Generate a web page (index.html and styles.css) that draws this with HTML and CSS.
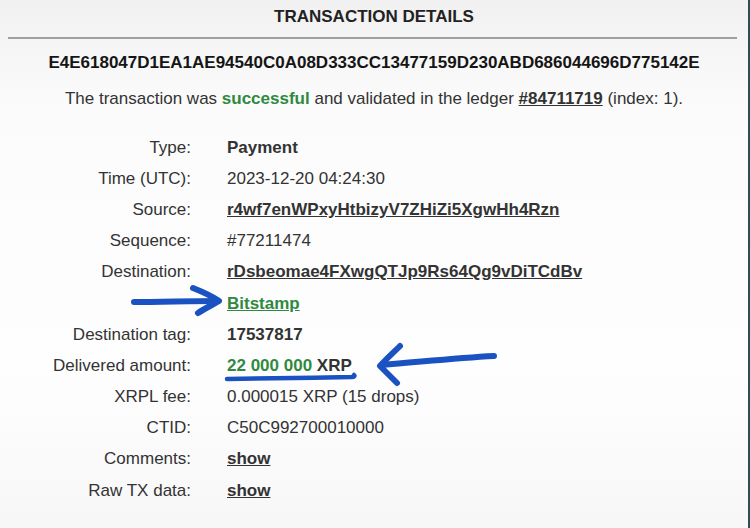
FILE: index.html
```html
<!DOCTYPE html>
<html>
<head>
<meta charset="utf-8">
<link rel="stylesheet" href="styles.css">
</head>
<body>
<div class="page">
  <h1 class="title">TRANSACTION DETAILS</h1>
  <div class="rule"></div>
  <div class="hash">E4E618047D1EA1AE94540C0A08D333CC13477159D230ABD686044696D775142E</div>
  <p class="status">The transaction was <b class="ok">successful</b> and validated in the ledger <a class="link" href="#">#84711719</a> (index: 1).</p>
  <div class="details">
    <div class="label">Type:</div><div class="value"><b>Payment</b></div>
    <div class="label">Time (UTC):</div><div class="value">2023-12-20 04:24:30</div>
    <div class="label">Source:</div><div class="value"><a class="link" href="#">r4wf7enWPxyHtbizyV7ZHiZi5XgwHh4Rzn</a></div>
    <div class="label">Sequence:</div><div class="value">#77211474</div>
    <div class="label">Destination:</div><div class="value"><a class="link" href="#">rDsbeomae4FXwgQTJp9Rs64Qg9vDiTCdBv</a></div>
    <div class="label"></div><div class="value"><a class="link green" href="#">Bitstamp</a></div>
    <div class="label">Destination tag:</div><div class="value"><b>17537817</b></div>
    <div class="label">Delivered amount:</div><div class="value"><b class="ok">22 000 000</b> <b>XRP</b></div>
    <div class="label">XRPL fee:</div><div class="value">0.000015 XRP (15 drops)</div>
    <div class="label">CTID:</div><div class="value">C50C992700010000</div>
    <div class="label">Comments:</div><div class="value"><a class="link" href="#">show</a></div>
    <div class="label">Raw TX data:</div><div class="value"><a class="link" href="#">show</a></div>
  </div>
  <svg class="marks" width="750" height="528" viewBox="0 0 750 528">
    <g fill="none" stroke="#1b52c2" stroke-linecap="round" stroke-linejoin="round">
      <path d="M134 302 C160 302 190 301 216 301" stroke-width="6"/>
      <path d="M193 288 C203 292 212 296 219 301 C212 305 204 309 198 313" stroke-width="6"/>
      <path d="M494 356 C455 358 420 362 382 365" stroke-width="6"/>
      <path d="M400 346 C393 353 386 359 380 366 C386 372 392 378 397 383" stroke-width="6"/>
      <path d="M227 379 C265 378 310 378 352 377 C354 377 355 376 354 375" stroke-width="4.5"/>
    </g>
  </svg>
</div>
</body>
</html>
```
FILE: styles.css
```css
html, body {
  margin: 0;
  padding: 0;
}
body {
  width: 750px;
  height: 528px;
  overflow: hidden;
  font-family: "Liberation Sans", Arial, sans-serif;
  font-size: 17px;
  color: #333;
}
.page {
  position: relative;
  box-sizing: border-box;
  width: 750px;
  height: 528px;
  background: linear-gradient(#f1f1f1, #fbfbfb 20%, #fefefe 70%, #f7f7f7);
  border-right: 2px solid #2c4e58;
  padding-top: 2px;
}
.title {
  margin: 0;
  height: 35px;
  line-height: 30px;
  text-align: center;
  font-size: 17px;
  font-weight: bold;
  color: #222;
}
.rule {
  height: 2px;
  margin: 0 11px 0 8px;
  background: #a0a0a0;
}
.hash {
  margin-top: 12px;
  line-height: 24px;
  text-align: center;
  font-weight: bold;
  color: #151515;
}
.status {
  margin: 12px 0 0;
  line-height: 24px;
  text-align: center;
}
.ok {
  color: #2f8a3f;
}
.link {
  color: #333;
  font-weight: bold;
  text-decoration: underline;
}
.link.green {
  color: #2f8a3f;
}
.details {
  margin-top: 21px;
  display: grid;
  grid-template-columns: 191px 1fr;
  column-gap: 36px;
  grid-auto-rows: 31.2px;
  align-items: center;
}
.label {
  text-align: right;
}
.value b {
  font-weight: bold;
}
.marks {
  position: absolute;
  top: 0;
  left: 0;
}
```
